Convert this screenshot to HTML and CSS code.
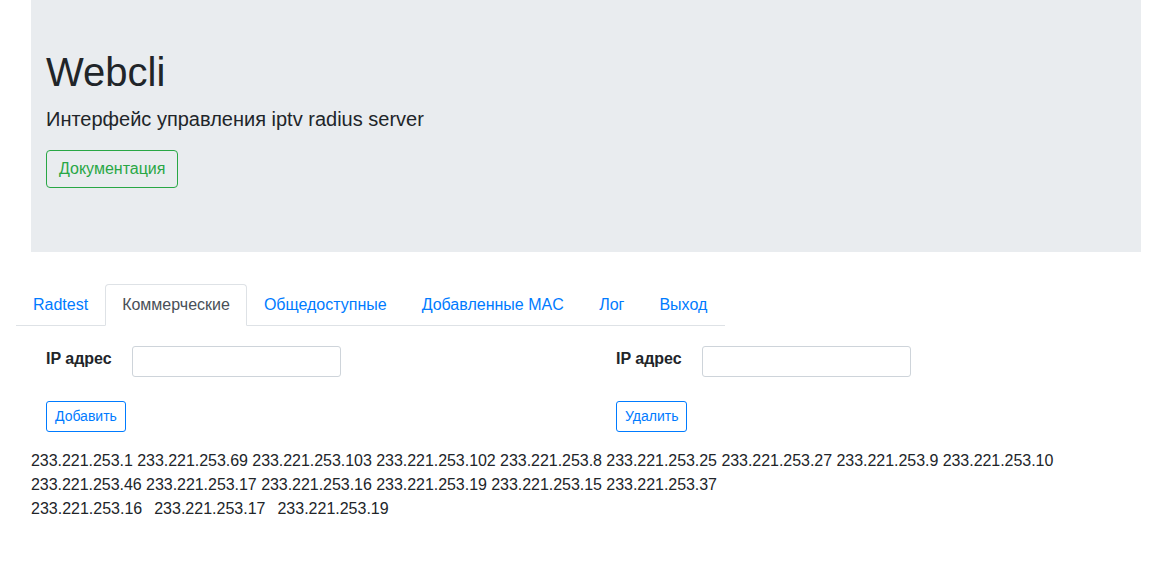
FILE: index.html
```html
<!DOCTYPE html>
<html lang="ru">
<head>
<meta charset="utf-8">
<title>Webcli</title>
<link rel="stylesheet" href="styles.css">
</head>
<body>
<div class="page">
  <header class="jumbotron">
    <h1 class="display">Webcli</h1>
    <p class="lead">Интерфейс управления iptv radius server</p>
    <a class="btn btn-outline-success" href="#">Документация</a>
  </header>

  <ul class="nav-tabs">
    <li><a class="nav-link" href="#">Radtest</a></li>
    <li><a class="nav-link active" href="#">Коммерческие</a></li>
    <li><a class="nav-link" href="#">Общедоступные</a></li>
    <li><a class="nav-link wide" href="#">Добавленные MAC</a></li>
    <li><a class="nav-link wide-sm" href="#">Лог</a></li>
    <li><a class="nav-link wide-sm" href="#">Выход</a></li>
  </ul>

  <div class="forms">
    <form class="ip-form">
      <div class="field">
        <label class="field-label">IP адрес</label>
        <input class="input" type="text">
      </div>
      <button class="btn-sm btn-outline-primary" type="button">Добавить</button>
    </form>
    <form class="ip-form">
      <div class="field">
        <label class="field-label">IP адрес</label>
        <input class="input" type="text">
      </div>
      <button class="btn-sm btn-outline-primary" type="button">Удалить</button>
    </form>
  </div>

  <p class="ip-list">233.221.253.1 233.221.253.69 233.221.253.103 233.221.253.102 233.221.253.8 233.221.253.25 233.221.253.27 233.221.253.9 233.221.253.10 233.221.253.46 233.221.253.17 233.221.253.16 233.221.253.19 233.221.253.15 233.221.253.37</p>
  <div class="ip-row">
    <span>233.221.253.16</span>
    <span>233.221.253.17</span>
    <span>233.221.253.19</span>
  </div>
</div>
</body>
</html>
```
FILE: styles.css
```css
* { box-sizing: border-box; }

html, body {
  margin: 0;
  padding: 0;
  background: #fff;
}

body {
  font-family: "Liberation Sans", Arial, sans-serif;
  font-size: 16px;
  line-height: 1.5;
  color: #212529;
}

.page {
  margin-left: 31px;
  width: 1110px;
}

.jumbotron {
  background: #e9ecef;
  padding: 48px 15px 64px;
  margin: 0 0 32px;
}

.display {
  font-size: 40px;
  font-weight: 300;
  line-height: 1.2;
  margin: 0 0 8px;
}

.lead {
  font-size: 20px;
  font-weight: 300;
  line-height: 1.5;
  margin: 0 0 16px;
}

.btn {
  display: inline-block;
  font-size: 16px;
  line-height: 24px;
  padding: 6px 12px;
  border: 1px solid transparent;
  border-radius: 4px;
  text-decoration: none;
}

.btn-outline-success {
  color: #28a745;
  border-color: #28a745;
}

.nav-tabs {
  display: inline-flex;
  list-style: none;
  margin: 0 0 0 -15px;
  padding: 0;
  border-bottom: 1px solid #dee2e6;
}

.nav-tabs li {
  margin-bottom: -1px;
}

.nav-link {
  display: block;
  padding: 8px 16px;
  line-height: 24px;
  border: 1px solid transparent;
  border-top-left-radius: 4px;
  border-top-right-radius: 4px;
  color: #007bff;
  text-decoration: none;
}

.nav-link.wide {
  padding: 8px 17px;
}

.nav-link.wide-sm {
  padding: 8px 16.5px;
}

.nav-link.active {
  color: #495057;
  background: #fff;
  border-color: #dee2e6 #dee2e6 #fff;
}

.forms {
  display: grid;
  grid-template-columns: 570px 1fr;
  padding: 20px 0 0 15px;
}

.ip-form {
  display: flex;
  flex-direction: column;
  align-items: flex-start;
  gap: 24px;
  margin: 0;
}

.field {
  display: flex;
  align-items: flex-start;
  gap: 20px;
}

.field-label {
  font-weight: 700;
  line-height: 24px;
  padding-top: 1px;
}

.input {
  width: 209px;
  height: 31px;
  border: 1px solid #ced4da;
  border-radius: 3px;
  padding: 4px 8px;
  font-family: inherit;
  font-size: 14px;
  background: #fff;
}

.btn-sm {
  font-family: inherit;
  font-size: 14px;
  line-height: 21px;
  padding: 4px 8px;
  border-radius: 3px;
  background: #fff;
  cursor: pointer;
}

.btn-outline-primary {
  color: #007bff;
  border: 1px solid #007bff;
}

.ip-list {
  margin: 17px 0 0;
  letter-spacing: -0.04px;
}

.ip-row {
  display: flex;
  gap: 12px;
}
```
